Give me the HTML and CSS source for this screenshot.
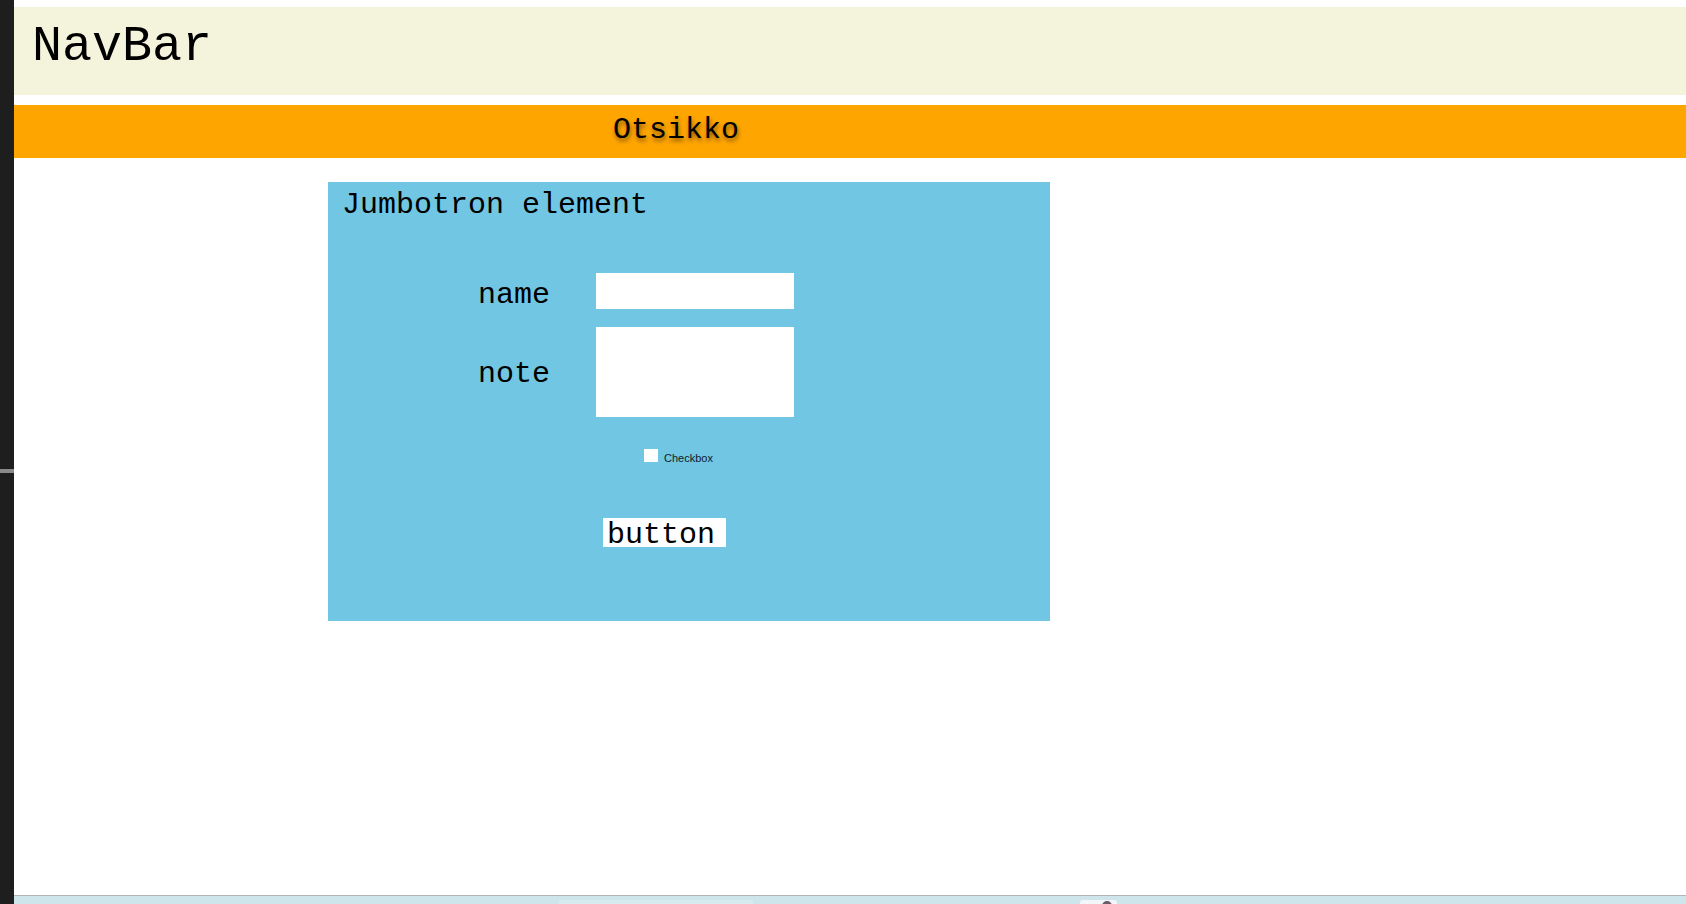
FILE: index.html
```html
<!DOCTYPE html>
<html lang="fi">
<head>
<meta charset="utf-8">
<title>NavBar</title>
<link rel="stylesheet" href="styles.css">
</head>
<body>
<div class="page">
  <aside class="side"><div class="side-mark"></div></aside>
  <div class="main">
    <nav class="navbar">NavBar</nav>
    <header class="banner"><h1 class="banner-title">Otsikko</h1></header>
    <section class="content">
      <div class="jumbo">
        <h2 class="jumbo-title">Jumbotron element</h2>
        <form class="form">
          <div class="fields">
            <label class="lbl lbl-name" for="name">name</label>
            <input class="inp" id="name" type="text">
            <label class="lbl lbl-note" for="note">note</label>
            <textarea class="area" id="note"></textarea>
          </div>
          <label class="check"><input class="box" type="checkbox"><span class="check-text">Checkbox</span></label>
          <button class="btn" type="button">button</button>
        </form>
      </div>
    </section>
    <footer class="dock">
      <span class="dock-slot"></span>
      <span class="dock-icon"><span class="dock-dot"></span></span>
    </footer>
  </div>
</div>
</body>
</html>
```
FILE: styles.css
```css
* { box-sizing: border-box; }
html, body { margin: 0; padding: 0; }
body { background: #ffffff; font-family: "Liberation Mono", "Courier New", monospace; color: #000; }

.page { display: flex; height: 904px; overflow: hidden; }

.side { width: 14px; flex: 0 0 14px; background: #1e1e1e; }
.side-mark { margin-top: 469px; height: 4px; background: #8a8a8a; }

.main { flex: 1; display: flex; flex-direction: column; padding-top: 7px; }

.navbar {
  height: 88px;
  background: #f4f4dc;
  font-size: 50px;
  line-height: 57px;
  padding: 11px 0 0 18px;
}

.banner { margin-top: 10px; height: 53px; background: #ffa500; padding-left: 599px; }
.banner-title {
  margin: 0;
  font-size: 30px;
  font-weight: normal;
  line-height: 34px;
  padding-top: 8px;
  text-shadow: 1px 3px 4px rgba(0,0,0,0.45);
}

.content { flex: 1; padding: 24px 0 0 314px; }

.jumbo {
  width: 722px;
  height: 439px;
  background: #71c7e3;
  padding: 6px 0 0 14px;
}
.jumbo-title { margin: 0; font-size: 30px; font-weight: normal; line-height: 34px; }

.form { display: flex; flex-direction: column; align-items: flex-start; }

.fields {
  margin: 51px 0 0 136px;
  display: grid;
  grid-template-columns: 118px 198px;
  grid-template-rows: 36px 90px;
  row-gap: 18px;
}
.lbl { font-size: 30px; line-height: 36px; }
.lbl-name { padding-top: 4px; }
.lbl-note { align-self: center; padding-top: 4px; }
.inp, .area {
  display: block;
  width: 198px;
  border: 0;
  margin: 0;
  padding: 0;
  background: #ffffff;
  outline: none;
}
.inp { height: 36px; }
.area { height: 90px; resize: none; }

.check {
  margin: 32px 0 0 302px;
  display: flex;
  align-items: flex-start;
  font-family: "Liberation Sans", Arial, sans-serif;
  font-size: 11px;
  line-height: 13px;
  color: #10202a;
}
.check-text { padding-top: 3px; }
.box {
  appearance: none;
  -webkit-appearance: none;
  width: 14px;
  height: 13px;
  margin: 0 6px 0 0;
  background: #ffffff;
  border: 0;
}

.btn {
  margin: 53px 0 0 261px;
  height: 29px;
  width: 123px;
  padding: 3px 0 0 4px;
  border: 0;
  background: #ffffff;
  font-family: "Liberation Mono", "Courier New", monospace;
  font-size: 30px;
  line-height: 29px;
  text-align: left;
  color: #000;
  overflow: visible;
}

.dock {
  height: 9px;
  border-top: 1px solid #b2b6b8;
  background: #cfe5ec;
  position: relative;
}
.dock-slot { position: absolute; left: 545px; top: 4px; width: 194px; height: 4px; background: #d8ebf0; }
.dock-icon { position: absolute; left: 1066px; top: 4px; width: 37px; height: 6px; border-radius: 3px 3px 0 0; background: #f2f6f8; }
.dock-dot { position: absolute; left: 22px; top: 1px; width: 10px; height: 5px; border-radius: 5px 5px 0 0; background: #6a5a6a; }
```
